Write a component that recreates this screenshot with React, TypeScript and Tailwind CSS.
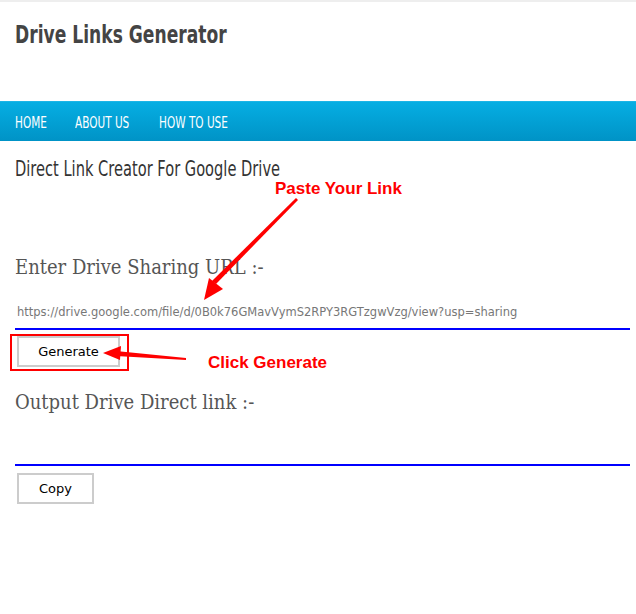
const sans = { fontFamily: '"DejaVu Sans", sans-serif' };
const slab = { fontFamily: '"DejaVu Serif", serif', fontStretch: 'condensed' };

export default function App() {
  const url = 'https://drive.google.com/file/d/0B0k76GMavVymS2RPY3RGTzgwVzg/view?usp=sharing';

  return (
    <div className="relative w-[636px] h-[614px] bg-white overflow-hidden">
      {/* Header */}
      <div className="h-[101px] border-t-2 border-[#eeeeee] px-[15px] pt-[18px]">
        <h1
          className="inline-block origin-left scale-x-[0.685] text-[25px] leading-[30px] font-bold text-[#444444] whitespace-nowrap"
          style={sans}
        >
          Drive Links Generator
        </h1>
      </div>

      {/* Nav */}
      <nav className="h-[40px] flex items-center px-[15px] border-t border-[#1cb5e6] bg-gradient-to-b from-[#06aee3] to-[#0093c6]">
        <div className="w-[60px]">
          <span className="inline-block origin-left scale-x-[0.7] text-white text-[15px] leading-none" style={sans}>
            HOME
          </span>
        </div>
        <div className="w-[84px]">
          <span className="inline-block origin-left scale-x-[0.7] text-white text-[15px] leading-none whitespace-nowrap" style={sans}>
            ABOUT US
          </span>
        </div>
        <div>
          <span className="inline-block origin-left scale-x-[0.7] text-white text-[15px] leading-none whitespace-nowrap" style={sans}>
            HOW TO USE
          </span>
        </div>
      </nav>

      {/* Content */}
      <div className="pl-[15px] pr-[6px] pt-[15px]">
        <h2
          className="inline-block origin-left scale-x-[0.665] text-[22px] leading-[26px] text-[#333333] whitespace-nowrap"
          style={sans}
        >
          Direct Link Creator For Google Drive
        </h2>

        <h3 className="mt-[72px] text-[20px] leading-[26px] text-[#555555]" style={slab}>
          Enter Drive Sharing URL :-
        </h3>

        <div className="mt-[21px] h-[29px] border-b-2 border-[#0000ff] flex items-center px-[2px]">
          <span className="text-[11.5px] leading-none mb-[4px] text-[#777777] whitespace-nowrap" style={sans}>
            {url}
          </span>
        </div>

        <div className="mt-[6px] ml-[2px]">
          <button
            className="w-[103px] h-[31px] border-2 border-[#cccccc] bg-white text-[13px] text-black"
            style={sans}
          >
            Generate
          </button>
        </div>

        <h3 className="mt-[22px] text-[20px] leading-[26px] text-[#555555]" style={slab}>
          Output Drive Direct link :-
        </h3>

        <div className="mt-[27px] h-[24px] border-b-2 border-[#0000ff]" />

        <div className="mt-[7px] ml-[2px]">
          <button
            className="w-[77px] h-[31px] border-2 border-[#cccccc] bg-white text-[13px] text-black"
            style={sans}
          >
            Copy
          </button>
        </div>
      </div>

      {/* Annotations drawn over the page */}
      <div
        className="absolute left-[275px] top-[180px] text-[17px] font-bold text-[#ff0000] leading-none"
        style={{ fontFamily: '"Liberation Sans", Arial, sans-serif' }}
      >
        Paste Your Link
      </div>
      <div
        className="absolute left-[208px] top-[354px] text-[17px] font-bold text-[#ff0000] leading-none"
        style={{ fontFamily: '"Liberation Sans", Arial, sans-serif' }}
      >
        Click Generate
      </div>
      <div className="absolute left-[10px] top-[334px] w-[119px] h-[37px] border-2 border-[#ff0000]" />
      <svg className="absolute inset-0 pointer-events-none" width="636" height="614">
        {/* arrow to the url field */}
        <polygon points="296,198 298,200 216,284 212,281" fill="#ff0000" />
        <polygon points="204,300 209,278 223,289" fill="#ff0000" />
        {/* arrow to the button */}
        <polygon points="186,358 186,360 116,356 116,351" fill="#ff0000" />
        <polygon points="103,353 121,346 120,360" fill="#ff0000" />
      </svg>
    </div>
  );
}
